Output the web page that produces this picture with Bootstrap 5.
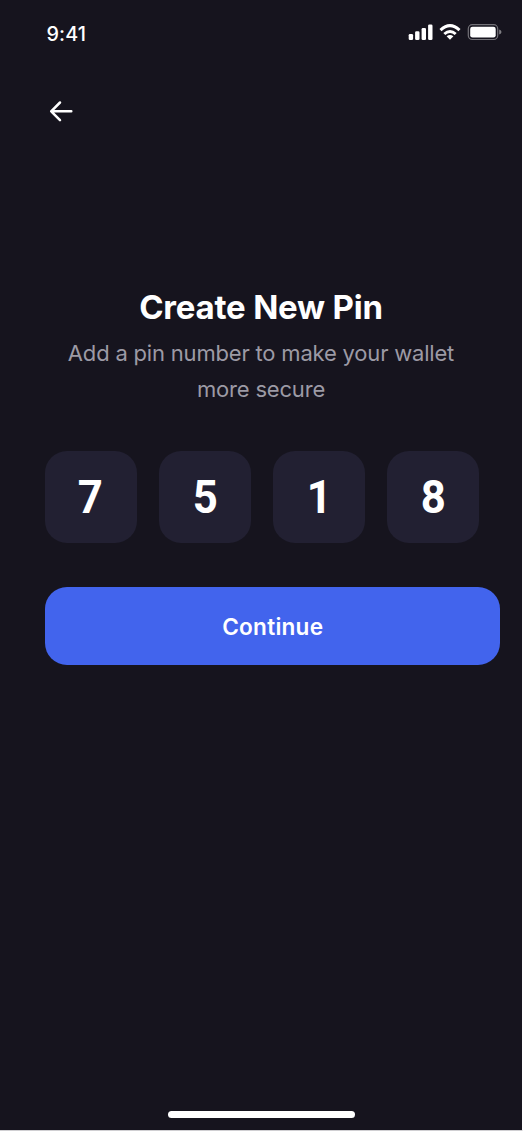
<!DOCTYPE html>
<html lang="en">
<head>
<meta charset="utf-8">
<meta name="viewport" content="width=device-width, initial-scale=1">
<title>Create New Pin</title>
<link href="https://cdn.jsdelivr.net/npm/bootstrap@5.3.0/dist/css/bootstrap.min.css" rel="stylesheet">
<style>
body{background:#16141e;font-family:Inter,"Liberation Sans",sans-serif;color:#fff}
.screen{height:1131px;border-bottom:1px solid #d0cfd2;border-right:1px solid #fff;overflow:hidden}
.status{height:66px;padding:24px 20px 0 46.5px}
.clock{font-size:19.8px;font-weight:550;line-height:20px;letter-spacing:.1px}
.back{margin:33px 0 0 48px;width:26px;height:24px}
.intro{margin-top:162px}
.heading{font-size:33px;font-weight:700;line-height:44px;letter-spacing:-.2px}
.lede{margin-top:6px;font-size:22px;line-height:36px;letter-spacing:-.19px;color:#9c9aa5}
.pins{margin:44px 0 0 44.5px;gap:22.3px}
.pin{width:92px;height:92px;border-radius:22px;background:#222032;font:700 46px/1 Roboto,sans-serif}
.pin span{transform:scaleX(.95)}
.cta{margin:44.4px 22px 0 44.5px;height:78px;padding:2px 0 0 1px;border-radius:22px;background:#4264ed;color:#fff;font-size:22.6px;font-weight:600;letter-spacing:.25px}
.cta:hover{background:#3a5ae0;color:#fff}
.home{width:187px;height:7px;margin:0 0 12px 168px}
</style>
</head>
<body>
<main class="screen d-flex flex-column">
<header class="status d-flex justify-content-between align-items-start">
<span class="clock">9:41</span>
<svg width="94" height="17" viewBox="408 24 94 17" fill="#fff" aria-hidden="true">
<rect x="408.7" y="34" width="4.4" height="6" rx="1.3"/><rect x="415.1" y="31.2" width="4.4" height="8.8" rx="1.3"/><rect x="421.6" y="27.9" width="4.4" height="12.1" rx="1.3"/><rect x="428.1" y="24.4" width="4.4" height="15.6" rx="1.3"/>
<g fill="none" stroke="#fff" stroke-width="3"><path d="M440.5 30.1Q450 21.2 459.5 30.1M444.3 34Q450 28.9 455.7 34"/></g><path d="M446.6 36.3Q450 33.7 453.4 36.3L450 39.8Z"/>
<rect x="468.3" y="24.7" width="29.4" height="14.8" rx="4" fill="none" stroke="#fff" stroke-opacity=".4" stroke-width="1.2"/><rect x="470.2" y="26.7" width="25.5" height="10.8" rx="2.3"/><path d="M499.2 29.4Q501.5 30.2 501.5 32T499.2 34.6Z" opacity=".45"/>
</svg>
</header>
<svg class="back flex-shrink-0" viewBox="48 99 26 24" fill="none" stroke="#fff" stroke-width="2.5" stroke-linecap="round" stroke-linejoin="round"><path d="M71.3 111.3H51.2M60 102.5L51.2 111.3L60 120.1"/></svg>
<section class="intro text-center">
<h1 class="heading mb-0">Create New Pin</h1>
<p class="lede mb-0">Add a pin number to make your wallet<br>more secure</p>
</section>
<div class="pins d-flex">
<div class="pin d-flex align-items-center justify-content-center"><span>7</span></div>
<div class="pin d-flex align-items-center justify-content-center"><span>5</span></div>
<div class="pin d-flex align-items-center justify-content-center"><span>1</span></div>
<div class="pin d-flex align-items-center justify-content-center"><span>8</span></div>
</div>
<button class="btn cta border-0" type="button">Continue</button>
<div class="home bg-white rounded-pill mt-auto"></div>
</main>
<script src="https://cdn.jsdelivr.net/npm/bootstrap@5.3.0/dist/js/bootstrap.bundle.min.js"></script>
</body>
</html>
